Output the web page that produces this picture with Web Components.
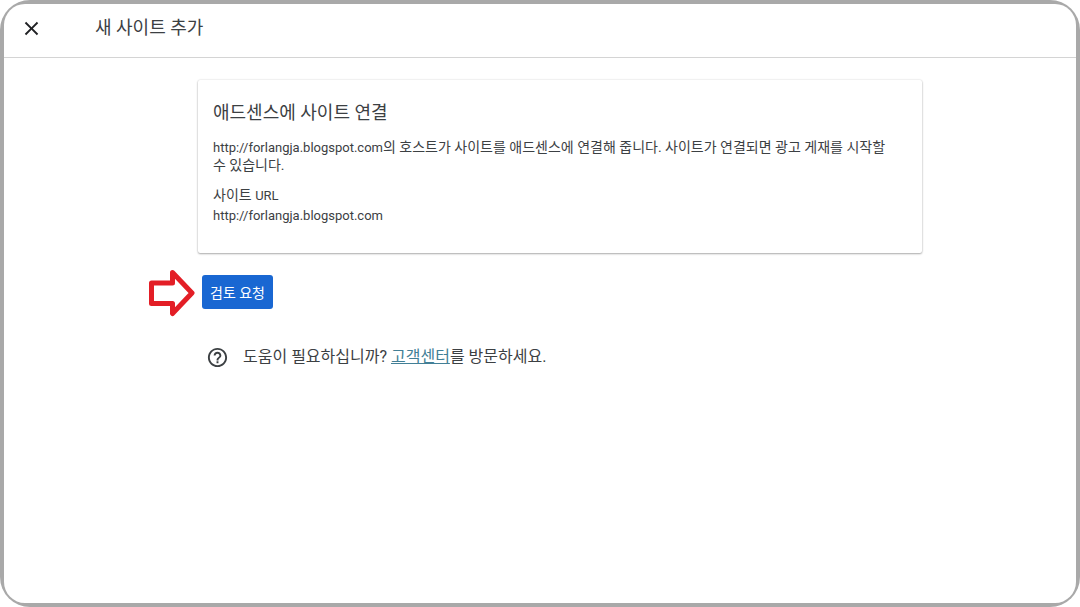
<!DOCTYPE html>
<html lang="ko">
<head>
<meta charset="utf-8">
<title>새 사이트 추가</title>
<style>
  html, body {
    height: 100%;
    margin: 0;
  }

  body {
    background: #fff;
    color: #3c4043;
    font-family: Roboto, "Noto Sans CJK KR", sans-serif;
    font-size: 14px;
  }
</style>
</head>
<body>
<window-frame>
  <dialog-header slot="header">새 사이트 추가</dialog-header>
  <site-card>
    <span slot="title">애드센스에 사이트 연결</span>
    <site-url>http://forlangja.blogspot.com</site-url>의 호스트가 사이트를 애드센스에 연결해 줍니다. 사이트가 연결되면 광고 게재를 시작할<br>수 있습니다.
    <span slot="label">사이트 <site-url>URL</site-url></span>
    <site-url slot="url">http://forlangja.blogspot.com</site-url>
  </site-card>
  <review-action>검토 요청</review-action>
  <help-line>도움이 필요하십니까? <help-link>고객센터</help-link>를 방문하세요.</help-line>
</window-frame>

<script>
class WindowFrame extends HTMLElement {
  constructor() {
    super();
    this.attachShadow({ mode: "open" });
    this.shadowRoot.innerHTML = `
      <style>
        :host {
          display: flex;
          box-sizing: border-box;
          min-height: 100%;
          padding: 4px;
          background: #a9a9a9;
          border-radius: 30px;
        }

        #panel {
          flex: 1;
          background: #fff;
          border-radius: 21px;
        }

        #content {
          padding: 22px 0 22px 40px;
        }

        main {
          display: flex;
          flex-direction: column;
          max-width: 724px;
          margin: 0 auto;
        }
      </style>
      <div id="panel">
        <slot name="header"></slot>
        <div id="content">
          <main><slot></slot></main>
        </div>
      </div>
    `;
  }
}

class DialogHeader extends HTMLElement {
  constructor() {
    super();
    this.attachShadow({ mode: "open" });
    this.shadowRoot.innerHTML = `
      <style>
        :host {
          display: block;
        }

        header {
          display: flex;
          align-items: center;
          gap: 52px;
          height: 49px;
          padding: 0 16px 4px;
          border-bottom: 1px solid #d4d4d4;
        }

        button {
          display: flex;
          padding: 0;
          border: 0;
          background: none;
          color: #202124;
          cursor: pointer;
        }

        h1 {
          margin: 0 0 2px;
          font-size: 18px;
          font-weight: 400;
          line-height: 24px;
        }
      </style>
      <header>
        <button type="button" aria-label="닫기">
          <svg width="23" height="23" viewBox="0 0 24 24" fill="currentColor">
            <path d="M19 6.41 17.59 5 12 10.59 6.41 5 5 6.41 10.59 12 5 17.59 6.41 19 12 13.41 17.59 19 19 17.59 13.41 12z"/>
          </svg>
        </button>
        <h1><slot></slot></h1>
      </header>
    `;
  }
}

class SiteCard extends HTMLElement {
  constructor() {
    super();
    this.attachShadow({ mode: "open" });
    this.shadowRoot.innerHTML = `
      <style>
        :host {
          display: block;
        }

        section {
          padding: 21px 15px 28px;
          border-radius: 2px;
          box-shadow: 0 1px 2px rgba(0, 0, 0, 0.3), 0 0 2px rgba(0, 0, 0, 0.16);
        }

        h2 {
          margin: 0 0 13px;
          font-size: 18px;
          font-weight: 400;
          line-height: 24px;
        }

        p {
          margin: 0 0 11px;
          line-height: 18px;
        }

        dl {
          margin: 0;
          line-height: 20px;
        }

        dd {
          margin: 0;
        }
      </style>
      <section>
        <h2><slot name="title"></slot></h2>
        <p><slot></slot></p>
        <dl>
          <dt><slot name="label"></slot></dt>
          <dd><slot name="url"></slot></dd>
        </dl>
      </section>
    `;
  }
}

class SiteUrl extends HTMLElement {
  constructor() {
    super();
    this.attachShadow({ mode: "open" });
    this.shadowRoot.innerHTML = `
      <style>
        :host {
          display: inline;
          font-size: 13px;
          line-height: 1;
        }
      </style>
      <slot></slot>`;
  }
}

class ReviewAction extends HTMLElement {
  constructor() {
    super();
    this.attachShadow({ mode: "open" });
    this.shadowRoot.innerHTML = `
      <style>
        :host {
          display: flex;
          position: relative;
          margin: 22px 4px 0;
        }

        button {
          height: 34px;
          padding: 0 8px;
          border: 0;
          border-radius: 3px;
          background: #1967d2;
          color: #fff;
          font: inherit;
          cursor: pointer;
        }

        /* pointer arrow hangs in the margin beside the button */
        svg {
          position: absolute;
          right: 100%;
          top: -6px;
          margin-right: 6px;
        }
      </style>
      <svg width="48" height="48" viewBox="0 0 48 48" fill="none" stroke="#e31e26" stroke-width="5" stroke-linejoin="round">
        <path d="M3.5 14H24.5V3.5L44 24 24.5 44.5V34.5H3.5Z"/>
      </svg>
      <button type="button"><slot></slot></button>
    `;
  }
}

class HelpLine extends HTMLElement {
  constructor() {
    super();
    this.attachShadow({ mode: "open" });
    this.shadowRoot.innerHTML = `
      <style>
        :host {
          display: flex;
          align-items: center;
          gap: 14px;
          margin: 36px 8px 0;
          font-size: 16px;
          line-height: 24px;
        }
      </style>
      <svg width="23" height="23" viewBox="0 0 24 24" fill="#3c4043" aria-hidden="true">
        <path d="M11 18h2v-2h-2v2zm1-16C6.48 2 2 6.48 2 12s4.48 10 10 10 10-4.48 10-10S17.52 2 12 2zm0 18c-4.41 0-8-3.59-8-8s3.59-8 8-8 8 3.59 8 8-3.59 8-8 8zm0-14c-2.21 0-4 1.79-4 4h2c0-1.1.9-2 2-2s2 .9 2 2c0 2-3 1.75-3 5h2c0-2.25 3-2.5 3-5 0-2.21-1.79-4-4-4z"/>
      </svg>
      <span><slot></slot></span>
    `;
  }
}

class HelpLink extends HTMLElement {
  constructor() {
    super();
    this.attachShadow({ mode: "open" });
    this.shadowRoot.innerHTML = `
      <style>
        :host {
          display: inline;
        }

        a {
          color: #427f96;
        }
      </style>
      <a href="#"><slot></slot></a>`;
  }
}

customElements.define("window-frame", WindowFrame);
customElements.define("dialog-header", DialogHeader);
customElements.define("site-card", SiteCard);
customElements.define("site-url", SiteUrl);
customElements.define("review-action", ReviewAction);
customElements.define("help-line", HelpLine);
customElements.define("help-link", HelpLink);
</script>
</body>
</html>
